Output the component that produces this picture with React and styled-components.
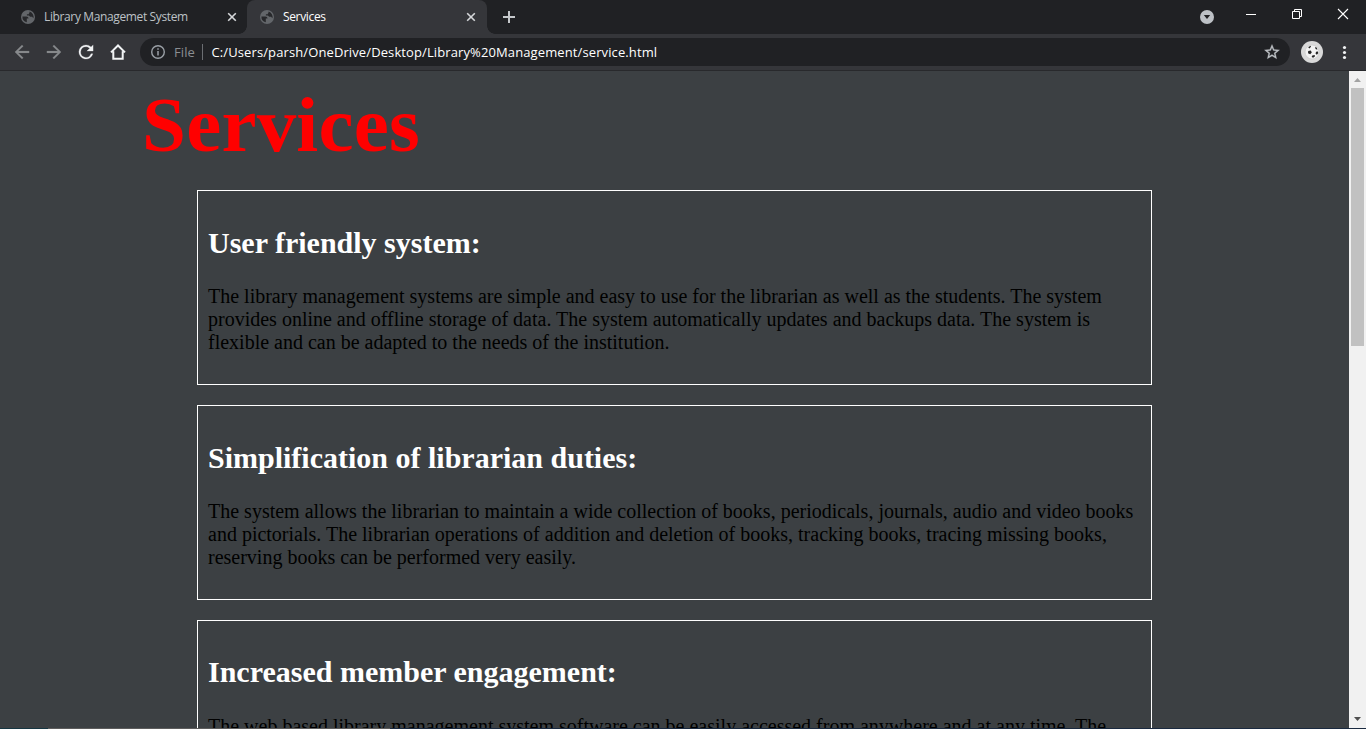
import React from 'react';
import styled, { createGlobalStyle } from 'styled-components';

const GlobalStyle = createGlobalStyle`
  * { box-sizing: border-box; }
  body { margin: 0; background: #3c4043; overflow: hidden; }
`;

const Window = styled.div`
  width: 1366px;
  height: 729px;
  display: flex;
  flex-direction: column;
  overflow: hidden;
  font-family: "Open Sans", "Noto Sans", sans-serif;
`;

const TabStrip = styled.header`
  height: 34px;
  flex: none;
  display: flex;
  background: #202124;
  padding-left: 8px;
`;

const Tab = styled.div`
  position: relative;
  width: ${(p) => (p.$active ? 240 : 239)}px;
  height: 34px;
  padding: 0 ${(p) => (p.$active ? 11 : 10)}px 0 13px;
  display: flex;
  align-items: center;
  border-radius: 8px 8px 0 0;
  background: ${(p) => (p.$active ? '#35363a' : 'transparent')};
  color: ${(p) => (p.$active ? '#ffffff' : '#bdc1c6')};
  &::before, &::after {
    content: ${(p) => (p.$active ? '""' : 'none')};
    position: absolute;
    bottom: 0;
    width: 8px;
    height: 8px;
  }
  &::before { left: -8px; background: radial-gradient(circle at 0 0, transparent 7.5px, #35363a 8px); }
  &::after { right: -8px; background: radial-gradient(circle at 100% 0, transparent 7.5px, #35363a 8px); }
`;

const TabTitle = styled.span`
  flex: 1;
  margin-left: 9px;
  font-size: 12px;
  line-height: 16px;
  white-space: nowrap;
  letter-spacing: ${(p) => p.$spacing}px;
`;

const NewTab = styled.div`
  width: 14px;
  height: 34px;
  margin-left: 15px;
  display: flex;
  align-items: center;
`;

const WindowControls = styled.div`
  margin-left: auto;
  display: flex;
  align-items: flex-start;
`;

const Toolbar = styled.div`
  height: 37px;
  flex: none;
  display: flex;
  align-items: center;
  background: #35363a;
  border-bottom: 1px solid #28292c;
  padding: 0 0 0 14px;
`;

const NavButtons = styled.nav`
  display: flex;
  gap: 16px;
`;

const AddressBar = styled.div`
  width: 1150px;
  height: 28px;
  flex: none;
  margin-left: 14px;
  padding: 0 9px 0 10px;
  display: flex;
  align-items: center;
  border-radius: 14px;
  background: #202124;
`;

const Scheme = styled.span`
  margin-left: 8px;
  width: 28px;
  font-size: 13px;
  line-height: 18px;
  color: #8b8e92;
  letter-spacing: 0.1px;
`;

const Url = styled.span`
  flex: 1;
  padding-left: 8.5px;
  font-size: 13px;
  line-height: 18px;
  color: #fff;
  white-space: nowrap;
  letter-spacing: 0.11px;
`;

const Separator = styled.i`
  width: 1px;
  height: 16px;
  background: #6b6e72;
`;

const Profile = styled.div`
  width: 22px;
  height: 22px;
  margin: 0 16px 0 11px;
`;

const Viewport = styled.div`
  height: 657px;
  flex: none;
  display: flex;
`;

const Page = styled.main`
  flex: 1;
  overflow: hidden;
  background: #3c4043;
  font-family: "Liberation Serif", serif;
  padding: 8px 197px 0;
`;

const PageTitle = styled.h1`
  margin: 0 0 19px -55px;
  font-size: 79px;
  line-height: 92px;
  letter-spacing: 0.2px;
  color: #f00;
`;

const Card = styled.section`
  width: 955px;
  height: 194.8px;
  margin-bottom: 20px;
  padding: 10px;
  border: 1px solid #fff;
`;

const CardTitle = styled.h2`
  margin: 24.9px 0 25.6px;
  font-size: 30px;
  line-height: 34px;
  color: #fff;
`;

const CardText = styled.p`
  margin: 0;
  font-size: 20px;
  line-height: 23px;
  color: #000;
  white-space: nowrap;
`;

const Scrollbar = styled.aside`
  width: 17px;
  display: flex;
  flex-direction: column;
  align-items: center;
  background: #f1f1f1;
`;

const Arrow = styled.svg`
  display: block;
  width: 17px;
  height: 17px;
  flex: none;
`;

const Thumb = styled.div`
  width: 13px;
  height: 258px;
  margin-bottom: auto;
  background: #c1c1c1;
`;

const Taskbar = styled.footer`
  height: 1px;
  background: linear-gradient(90deg, #163642 48px, #5d5d5d 48px, #5d5d5d 390px, #1a2a40 390px);
`;

const Globe = () => (
  <svg width="14" height="14" viewBox="0 0 14 14">
    <circle cx="7" cy="7" r="7" fill="#63666a" />
    <path d="M1.4 6.6h3.9c1.5 0 2.2.8 2.2 2H5.8v3.7A5.7 5.7 0 0 1 1.4 6.6zM8.6 1.6A5.6 5.6 0 0 1 12.5 8.2c-.7-.2-1-.8-1.3-1.4H9.3c-.7 0-.9-1.2-1.6-1.2H5.9V4.2h1.8c.2-.8.9-.9.9-2.6z" fill="#27282b" />
  </svg>
);

const CloseIcon = () => (
  <svg width="10" height="10" viewBox="0 0 10 10">
    <path d="M1.2 1.2 8.8 8.8M8.8 1.2 1.2 8.8" stroke="#d5d7da" strokeWidth="1.6" />
  </svg>
);

const Material = ({ d, fill }) => (
  <svg width="16" height="16" viewBox="3 3 18 18">
    <path d={d} fill={fill} stroke={fill} strokeWidth=".25" />
  </svg>
);

const Ball = () => (
  <svg width="22" height="22" viewBox="0 0 22 22">
    <circle cx="11" cy="11" r="11" fill="#d9d9d9" />
    <circle cx="11" cy="11" r="7" fill="#f3f3f3" stroke="#c4c4c4" strokeWidth=".6" />
    <path d="m7.2 6.2 2.3-1.4.5 1-1.6 1.6zM14.2 5.8l1.6 1 .6 2-1.9-.8zM7.2 10l2.6-.6 1 2-1.6 1.9-2.2-1zM15 10.8l2-.4.2 1.8-1.3 1.6-1.3-1zM11.3 14.4l2.4-.4.2 1.6-1.8 1.2-1.5-.7z" fill="#242424" />
  </svg>
);

const services = [
  {
    title: 'User friendly system:',
    lines: [
      'The library management systems are simple and easy to use for the librarian as well as the students. The system',
      'provides online and offline storage of data. The system automatically updates and backups data. The system is',
      'flexible and can be adapted to the needs of the institution.',
    ],
  },
  {
    title: 'Simplification of librarian duties:',
    lines: [
      'The system allows the librarian to maintain a wide collection of books, periodicals, journals, audio and video books',
      'and pictorials. The librarian operations of addition and deletion of books, tracking books, tracing missing books,',
      'reserving books can be performed very easily.',
    ],
  },
  {
    title: 'Increased member engagement:',
    lines: ['The web based library management system software can be easily accessed from anywhere and at any time. The'],
  },
];

export default function App() {
  return (
    <Window>
      <GlobalStyle />
      <TabStrip>
        <Tab>
          <Globe />
          <TabTitle $spacing={-0.37}>Library Managemet System</TabTitle>
          <CloseIcon />
        </Tab>
        <Tab $active>
          <Globe />
          <TabTitle $spacing={-0.35}>Services</TabTitle>
          <CloseIcon />
        </Tab>
        <NewTab>
          <svg width="14" height="14" viewBox="0 0 14 14">
            <path d="M7 1v12M1 7h12" stroke="#c5c8cb" strokeWidth="2" />
          </svg>
        </NewTab>
        <WindowControls>
          <svg width="166" height="34" viewBox="1200 0 166 34">
            <circle cx="1207" cy="17" r="7" fill="#bdc1c6" />
            <path d="M1203.8 15h6.4l-3.2 4z" fill="#202124" />
            <path d="M1246 14.5h10" stroke="#fff" />
            <path d="M1292.5 11.5h7v7h-7zM1294.5 11.5v-2h7v7h-2" fill="none" stroke="#fff" />
            <path d="m1338 9 10 10m0-10-10 10" stroke="#fff" strokeWidth="1.1" />
          </svg>
        </WindowControls>
      </TabStrip>
      <Toolbar>
        <NavButtons>
          <Material fill="#87898c" d="M20 11H7.83l5.59-5.59L12 4l-8 8 8 8 1.41-1.41L7.83 13H20v-2z" />
          <Material fill="#87898c" d="m12 4-1.41 1.41L16.17 11H4v2h12.17l-5.58 5.59L12 20l8-8z" />
          <Material fill="#f1f3f4" d="M17.65 6.35A7.96 7.96 0 0 0 12 4a8 8 0 1 0 7.73 10h-2.08A6 6 0 1 1 12 6c1.66 0 3.14.69 4.22 1.78L13 11h7V4z" />
          <svg width="16" height="16" viewBox="0 0 16 16">
            <path d="M1 8.4 8 1.5l7 6.9M3.3 7.2v7.6h9.4V7.2" fill="none" stroke="#f1f3f4" strokeWidth="2" />
          </svg>
        </NavButtons>
        <AddressBar>
          <svg width="16" height="16" viewBox="0 0 16 16">
            <circle cx="8" cy="8" r="6.3" fill="none" stroke="#9aa0a6" strokeWidth="1.4" />
            <path d="M8 7v4.5M8 4.3v1.5" stroke="#9aa0a6" strokeWidth="1.5" />
          </svg>
          <Scheme>File</Scheme>
          <Separator />
          <Url>C:/Users/parsh/OneDrive/Desktop/Library%20Management/service.html</Url>
          <svg width="18" height="18" viewBox="0 0 24 24">
            <path fill="#bdc1c6" stroke="#bdc1c6" strokeWidth=".4" d="m22 9.24-7.19-.62L12 2 9.19 8.63 2 9.24l5.46 4.73L5.82 21 12 17.27 18.18 21l-1.63-7.03zM12 15.4l-3.76 2.27 1-4.28-3.32-2.88 4.38-.38L12 6.1l1.71 4.04 4.38.38-3.32 2.88 1 4.28z" />
          </svg>
        </AddressBar>
        <Profile><Ball /></Profile>
        <svg width="12" height="16" viewBox="0 0 12 16">
          <g fill="#f1f3f4"><circle cx="5.5" cy="3.5" r="1.6" /><circle cx="5.5" cy="8.5" r="1.6" /><circle cx="5.5" cy="13.5" r="1.6" /></g>
        </svg>
      </Toolbar>
      <Viewport>
        <Page>
          <PageTitle>Services</PageTitle>
          {services.map((s) => (
            <Card key={s.title}>
              <CardTitle>{s.title}</CardTitle>
              {s.lines.map((l) => <CardText key={l}>{l}</CardText>)}
            </Card>
          ))}
        </Page>
        <Scrollbar>
          <Arrow viewBox="0 0 17 17"><path d="M5 11h7L8.5 7z" fill="#a3a3a3" /></Arrow>
          <Thumb />
          <Arrow viewBox="0 0 17 17"><path d="M5 6h7l-3.5 4z" fill="#505050" /></Arrow>
        </Scrollbar>
      </Viewport>
      <Taskbar />
    </Window>
  );
}
